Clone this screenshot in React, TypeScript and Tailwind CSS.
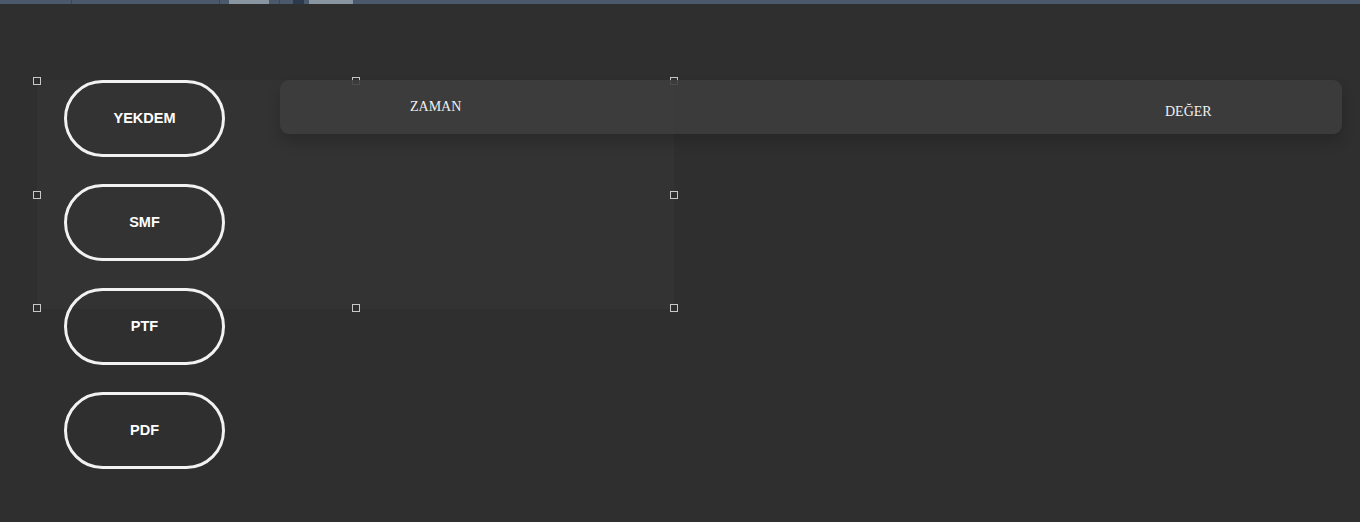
import React from "react";

const Handle = ({ className }: { className: string }) => (
  <div className={`absolute w-[8px] h-[8px] border border-[#c8c8c8] bg-[#2f2f2f] ${className}`} />
);

export default function App() {
  const buttons = ["YEKDEM", "SMF", "PTF", "PDF"];
  return (
    <div className="w-[1360px] h-[522px] bg-[#2f2f2f] overflow-hidden relative" style={{ fontFamily: '"Liberation Sans", Arial, sans-serif' }}>
      {/* top strip */}
      <div className="h-[4px] bg-[#4a596b] flex">
        <div className="w-[71px]" />
        <div className="w-px bg-[#3a4858]" />
        <div className="w-[147px]" />
        <div className="w-px bg-[#3a4858]" />
        <div className="w-[9px]" />
        <div className="w-[40px] bg-[#8a95a2]" />
        <div className="w-[10px]" />
        <div className="w-px bg-[#3a4858]" />
        <div className="w-[13px]" />
        <div className="w-[11px] bg-[#2c3a4c]" />
        <div className="w-[5px]" />
        <div className="w-[44px] bg-[#8a95a2]" />
      </div>

      {/* selection region */}
      <div className="absolute left-[37px] top-[80px] w-[637px] h-[229px] bg-[#333333]">
        <Handle className="-left-[4px] -top-[3px]" />
        <Handle className="left-[315px] -top-[3px]" />
        <Handle className="-right-[4px] -top-[3px]" />
        <Handle className="-left-[4px] top-[111px]" />
        <Handle className="-right-[4px] top-[111px]" />
        <Handle className="-left-[4px] -bottom-[3px]" />
        <Handle className="left-[315px] -bottom-[3px]" />
        <Handle className="-right-[4px] -bottom-[3px]" />
      </div>

      <div className="relative flex pl-[64px] pt-[76px]">
        <div className="flex flex-col gap-[27px]">
          {buttons.map((b) => (
            <div
              key={b}
              className="w-[161px] h-[77px] rounded-full border-[3px] border-[#f2f2f2] flex items-center justify-center pt-px text-white text-[14.5px] font-bold"
            >
              {b}
            </div>
          ))}
        </div>
        <div className="ml-[55px] w-[1062px] h-[54px] rounded-[9px] bg-[#3d3d3d]/90 shadow-[0_8px_14px_rgba(0,0,0,0.18)] relative">
          <span
            className="absolute left-[130px] top-[16px] text-[14px] text-[#f0f0f0]"
            style={{ fontFamily: '"Liberation Serif", "Times New Roman", serif' }}
          >
            ZAMAN
          </span>
          <span
            className="absolute left-[885px] top-[21px] text-[14px] text-[#f0f0f0]"
            style={{ fontFamily: '"Liberation Serif", "Times New Roman", serif' }}
          >
            DEĞER
          </span>
        </div>
      </div>
    </div>
  );
}
